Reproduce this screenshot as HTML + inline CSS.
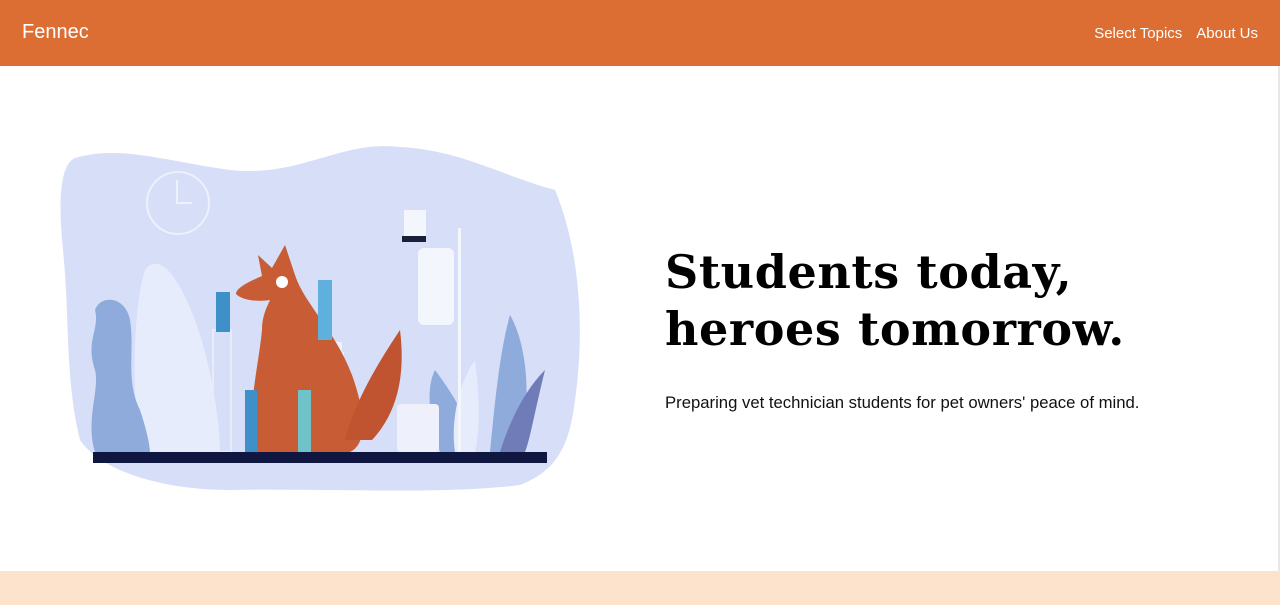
<!DOCTYPE html>
<html><head><meta charset="utf-8"><style>
*{margin:0;padding:0;box-sizing:border-box}
body{width:1280px;height:605px;overflow:hidden;background:#fff;font-family:"Liberation Sans",sans-serif;position:relative}
.nav{height:66px;background:#dc6d33;color:#fff;position:relative}
.brand{position:absolute;left:22px;top:21px;font-size:20px}
.links{position:absolute;right:22px;top:25px;font-size:15px}
.links span{margin-left:14px}
h1{position:absolute;left:665px;top:244px;font-family:"DejaVu Serif","Liberation Serif",serif;font-weight:bold;font-size:46px;line-height:57px;color:#000;letter-spacing:0.6px}
p{position:absolute;left:665px;top:393px;font-size:16.7px;color:#111}
.foot{position:absolute;left:0;top:571px;width:1280px;height:34px;background:#fde2cc}
.sb{position:absolute;right:0;top:66px;width:2px;height:505px;background:#e8e8e8}
svg{position:absolute;left:0;top:0}
</style></head><body>
<div class="nav"><div class="brand">Fennec</div><div class="links"><span>Select Topics</span><span>About Us</span></div></div>
<svg width="640" height="571" viewBox="0 0 640 571">
<path d="M75 158 C120 145 160 160 230 170 C300 178 340 140 400 147 C460 150 500 175 555 190 C580 250 585 330 575 400 C570 440 560 470 520 485 C440 495 330 488 230 490 C160 490 100 470 80 440 C65 380 70 320 63 250 C58 200 60 165 75 158Z" fill="#d6def8"/>
<circle cx="178" cy="203" r="31" fill="none" stroke="#eef1fc" stroke-width="2"/>
<path d="M177 180 V203 H192" fill="none" stroke="#eef1fc" stroke-width="2"/>
<path d="M140 452 C130 380 135 300 145 270 C160 250 180 280 195 320 C210 360 220 420 220 452Z" fill="#e6ecfc"/>
<path d="M95 452 C85 420 100 390 95 370 C85 340 100 330 95 310 C100 295 125 295 130 320 C135 350 125 380 140 410 C150 440 150 452 150 452Z" fill="#8eabdb"/>
<path d="M440 452 C430 420 425 390 435 370 C450 390 470 420 475 452Z" fill="#8eabdb"/>
<path d="M490 452 C495 400 500 350 510 315 C530 350 530 410 520 452Z" fill="#8eabdb"/>
<path d="M500 452 C510 420 525 390 545 370 C535 410 530 440 525 452Z" fill="#6f7cb8"/>
<path d="M455 452 C450 420 460 380 475 360 C480 400 480 430 475 452Z" fill="#e6ecfc"/>
<rect x="418" y="248" width="36" height="77" rx="6" fill="#f4f6fe"/>
<rect x="458" y="228" width="3" height="224" fill="#f4f6fe"/>
<rect x="397" y="404" width="42" height="48" rx="4" fill="#eef1fc"/>
<rect x="312" y="342" width="30" height="10" fill="#eef1fc"/>
<rect x="318" y="352" width="26" height="38" fill="#eef1fc"/>
<rect x="213" y="330" width="18" height="122" fill="none" stroke="#e6ecfc" stroke-width="2"/>
<path d="M255 452 C245 420 258 370 262 330 C262 315 268 305 270 300 C255 302 242 300 236 294 C236 288 248 282 262 276 L258 255 L272 268 L285 245 L295 275 C305 305 335 330 352 375 C368 420 365 445 350 452Z" fill="#c85c35"/>
<path d="M345 440 C355 400 380 360 400 330 C405 370 400 410 372 440Z" fill="#c05431"/>
<ellipse cx="282" cy="282" rx="6" ry="6" fill="#fff"/>
<rect x="216" y="292" width="14" height="40" fill="#3f8fc9"/>
<rect x="318" y="280" width="14" height="60" fill="#5fb0dc"/>
<rect x="245" y="390" width="12" height="62" fill="#3f8fc9"/>
<rect x="298" y="390" width="13" height="62" fill="#6fc2c8"/>
<rect x="404" y="210" width="22" height="30" fill="#f4f6fe"/>
<rect x="402" y="236" width="24" height="6" fill="#1a1f3a"/>
<rect x="93" y="452" width="454" height="11" fill="#0f1640"/>
</svg>
<h1>Students today,<br>heroes tomorrow.</h1>
<p>Preparing vet technician students for pet owners' peace of mind.</p>
<div class="sb"></div>
<div class="foot"></div>
</body></html>
